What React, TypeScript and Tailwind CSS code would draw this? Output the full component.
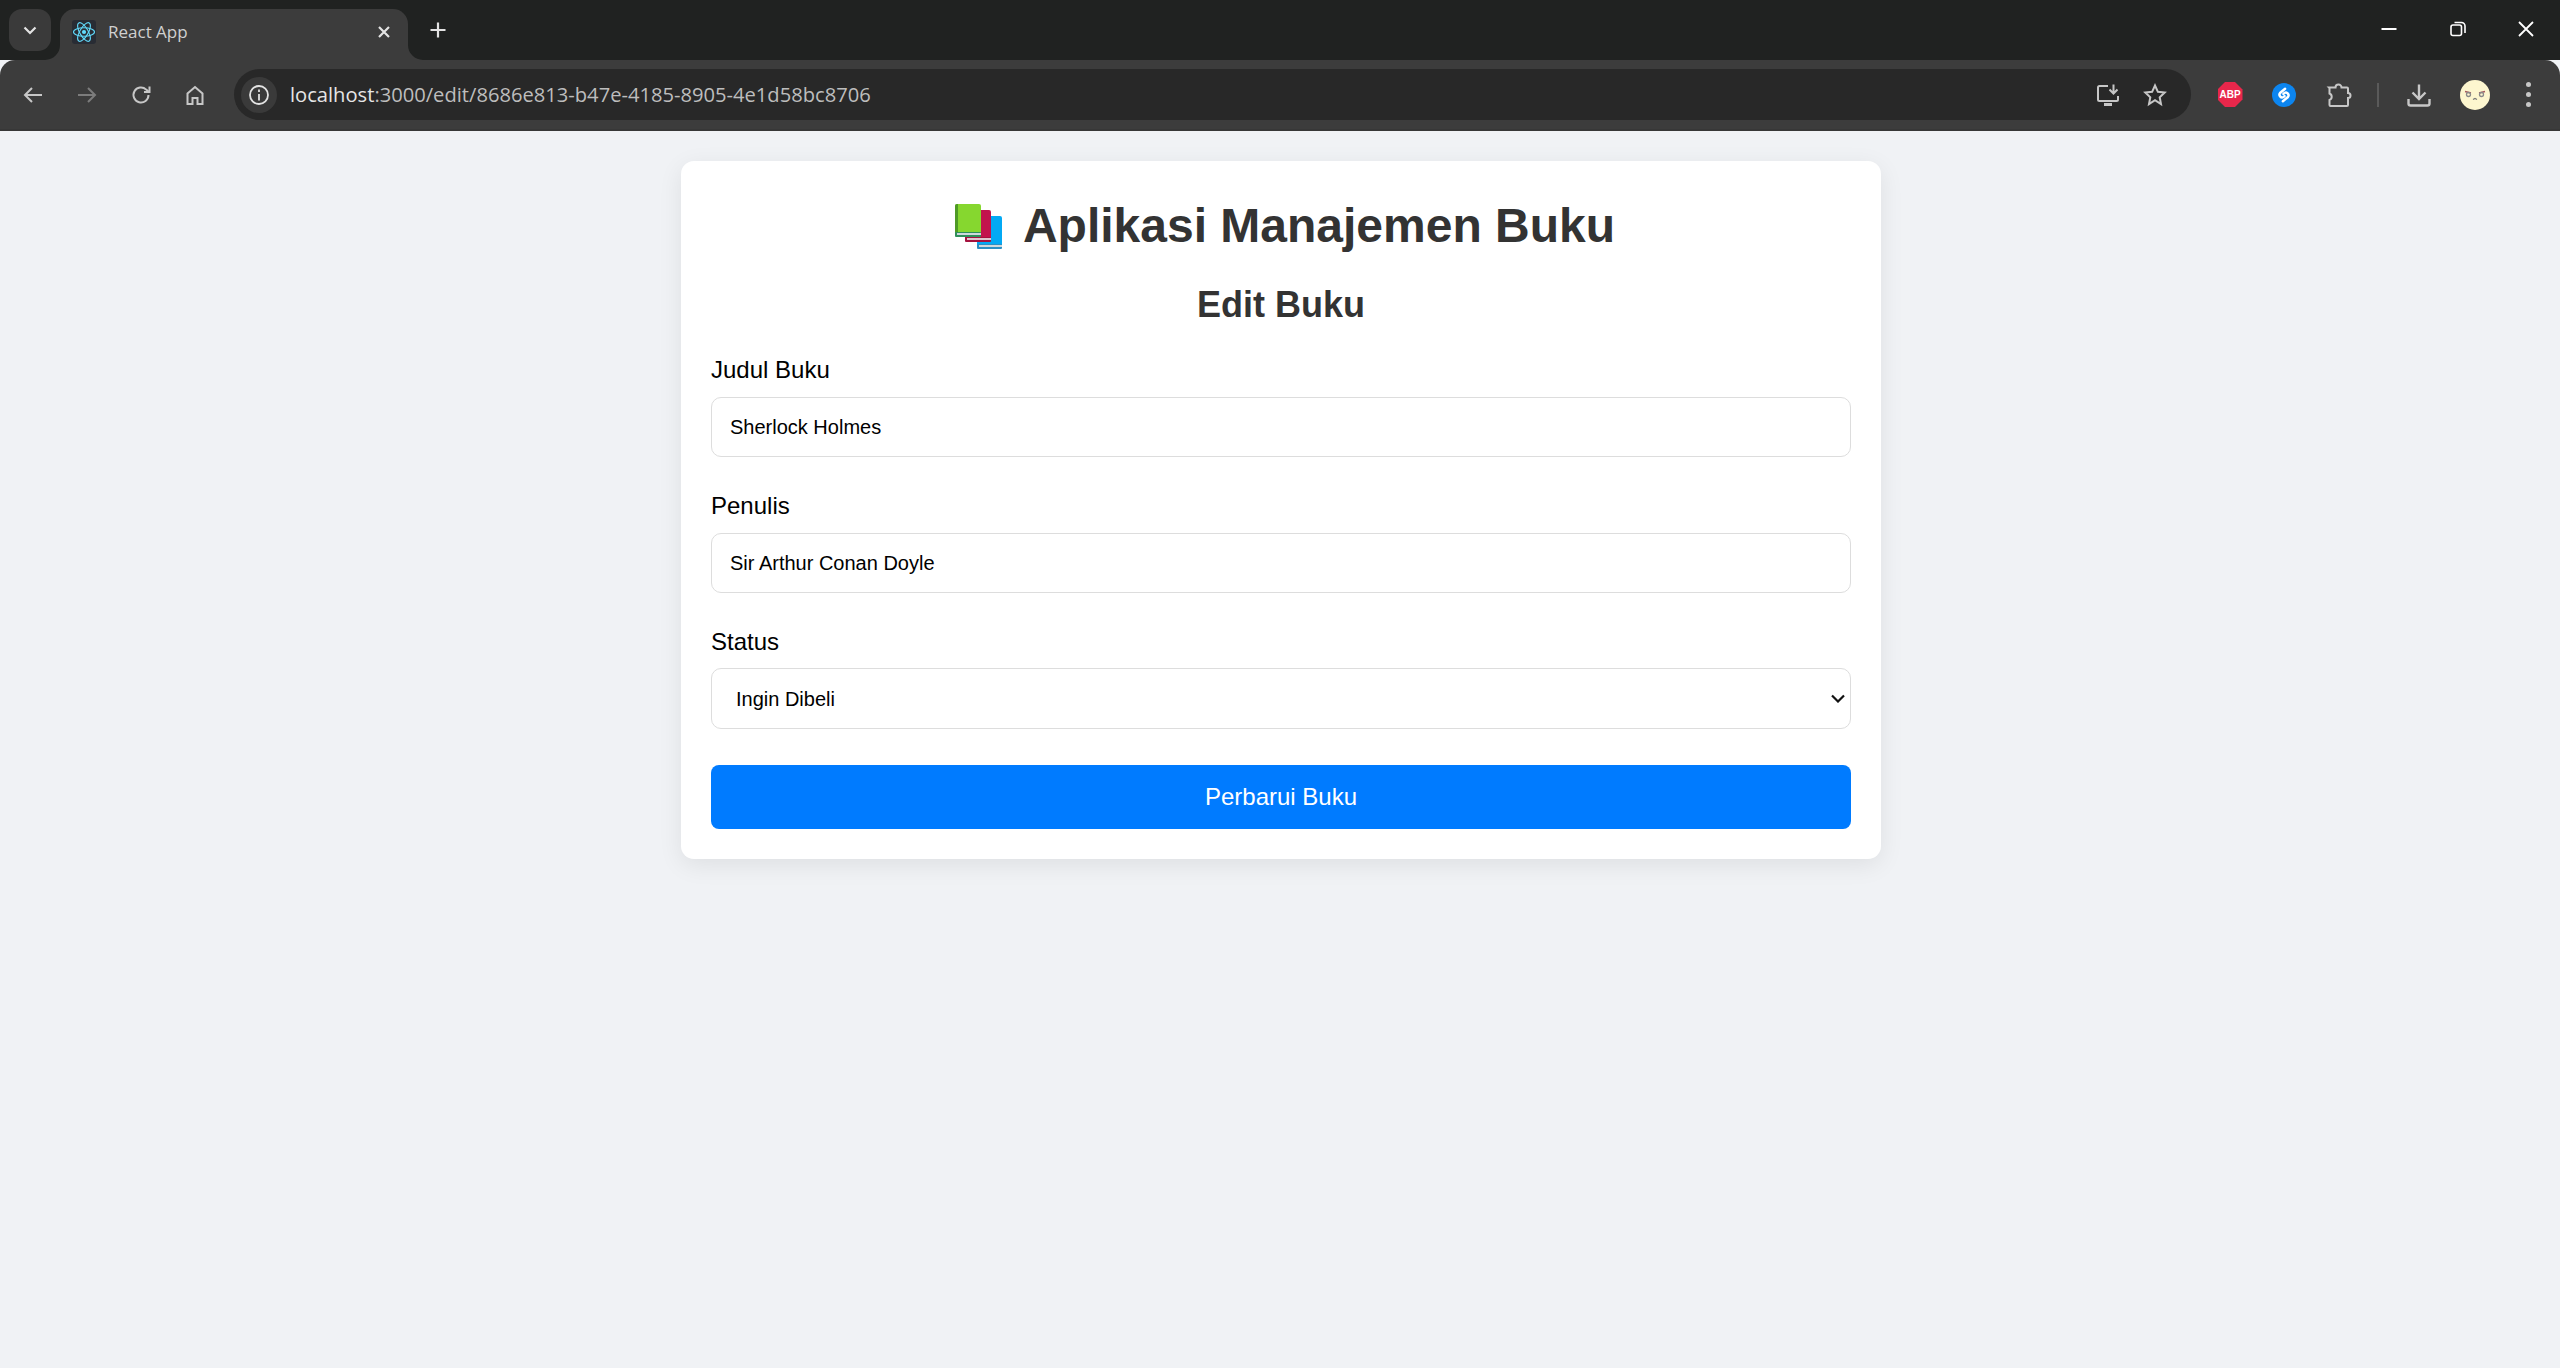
const UI_FONT = "font-['Open_Sans','Noto_Sans',sans-serif]";

function BooksEmoji() {
  return (
    <svg width="47" height="45" viewBox="0 0 47 45" className="shrink-0">
      {/* blue book */}
      <path d="M22 12h23a2 2 0 0 1 2 2v29H22z" fill="#03a9f4" />
      <rect x="22" y="40" width="25" height="5" rx="1" fill="#2b8fc4" />
      <rect x="24" y="41" width="23" height="2" fill="#cfd8dc" />
      {/* red book */}
      <path d="M10 6h24a2 2 0 0 1 2 2v27H10z" fill="#c2134d" />
      <rect x="10" y="33" width="26" height="5" rx="1" fill="#a5123f" />
      <rect x="12" y="34" width="24" height="2" fill="#e0c5cf" />
      {/* green book */}
      <path d="M2 0h22a2 2 0 0 1 2 2v30H0V2a2 2 0 0 1 2-2z" fill="#86d72f" />
      <path d="M2 0h1v32H0V2a2 2 0 0 1 2-2z" fill="#4f9a26" />
      <rect x="0" y="28" width="26" height="5" rx="1" fill="#2f8f5b" />
      <rect x="2" y="29" width="24" height="2" fill="#cfd8dc" />
    </svg>
  );
}

function ReactFavicon() {
  return (
    <div className="w-6 h-6 rounded-[3px] bg-[#282c34] flex items-center justify-center shrink-0">
      <svg width="24" height="24" viewBox="0 0 24 24" fill="none" stroke="#61dafb" strokeWidth="1.1">
        <circle cx="12" cy="12" r="2.1" fill="#61dafb" stroke="none" />
        <ellipse cx="12" cy="12" rx="10.5" ry="4.2" />
        <ellipse cx="12" cy="12" rx="10.5" ry="4.2" transform="rotate(60 12 12)" />
        <ellipse cx="12" cy="12" rx="10.5" ry="4.2" transform="rotate(120 12 12)" />
      </svg>
    </div>
  );
}

function ToolIcon({ children, dim }: { children: React.ReactNode; dim?: boolean }) {
  return (
    <div className="w-[54px] h-[42px] flex items-center justify-center shrink-0">
      <svg
        width="24"
        height="24"
        viewBox="0 0 24 24"
        fill="none"
        stroke={dim ? "#7c7c7c" : "#c7c7c7"}
        strokeWidth="2"
      >
        {children}
      </svg>
    </div>
  );
}

function TabStrip() {
  return (
    <div className="h-[60px] flex bg-[#202221] shrink-0">
      <div className="ml-[9px] mt-[9px] w-[42px] h-[42px] rounded-[13px] bg-[#3a3a3a] flex items-center justify-center">
        <svg width="16" height="16" viewBox="0 0 16 16" fill="none" stroke="#e3e3e3" strokeWidth="2.2">
          <path d="M2.5 5.5 8 11l5.5-5.5" />
        </svg>
      </div>
      <div className={`relative ml-[9px] mt-[9px] w-[348px] h-[51px] rounded-t-[15px] bg-[#3c3c3c] flex items-center pl-3 pr-[17px] pb-[6px] ${UI_FONT}`}>
        <svg width="15" height="15" viewBox="0 0 15 15" className="absolute -left-[15px] bottom-0">
          <path d="M15 0v15H0a15 15 0 0 0 15-15z" fill="#3c3c3c" />
        </svg>
        <svg width="15" height="15" viewBox="0 0 15 15" className="absolute -right-[15px] bottom-0">
          <path d="M0 0v15h15A15 15 0 0 1 0 0z" fill="#3c3c3c" />
        </svg>
        <ReactFavicon />
        <span className="ml-3 text-[17px] text-[#d0d0d0] leading-none">React App</span>
        <svg width="14" height="14" viewBox="0 0 14 14" className="ml-auto" stroke="#e3e3e3" strokeWidth="2.2">
          <path d="M2 2l10 10M12 2 2 12" />
        </svg>
      </div>
      <div className="ml-[9px] w-[42px] h-[60px] flex items-center justify-center">
        <svg width="18" height="18" viewBox="0 0 18 18" stroke="#e3e3e3" strokeWidth="2.2">
          <path d="M9 1.5v15M1.5 9h15" />
        </svg>
      </div>
      <div className="ml-auto flex">
        <div className="w-[69px] h-[58px] flex items-center justify-center">
          <svg width="16" height="16" viewBox="0 0 16 16" stroke="#ffffff" strokeWidth="2">
            <path d="M0.5 8h15" />
          </svg>
        </div>
        <div className="w-[69px] h-[58px] flex items-center justify-center">
          <svg width="16" height="16" viewBox="0 0 16 16" fill="none" stroke="#ffffff" strokeWidth="1.6">
            <rect x="1" y="4" width="10.5" height="10.5" rx="2" />
            <path d="M4.5 1.5h7a3.5 3.5 0 0 1 3.5 3.5v7" />
          </svg>
        </div>
        <div className="w-[68px] h-[58px] flex items-center justify-center">
          <svg width="16" height="16" viewBox="0 0 16 16" stroke="#ffffff" strokeWidth="1.8">
            <path d="M1 1l14 14M15 1 1 15" />
          </svg>
        </div>
      </div>
    </div>
  );
}

function AddressBar() {
  return (
    <div className="h-[71px] bg-[#3c3c3c] rounded-t-[15px] border-b-2 border-[#373737] flex items-start pt-[9px] shrink-0">
      <div className="ml-[6px] flex h-[51px] items-center">
        <ToolIcon>
          <path d="M21 12H4M11 5l-7 7 7 7" />
        </ToolIcon>
        <ToolIcon dim>
          <path d="M3 12h17M13 5l7 7-7 7" />
        </ToolIcon>
        <ToolIcon>
          <path d="M19.5 12a7.5 7.5 0 1 1-2.3-5.4L20 9" />
          <path d="M20.5 3.5V9H15" />
        </ToolIcon>
        <ToolIcon>
          <path d="M4.5 21V10.5L12 4l7.5 6.5V21h-5v-6h-5v6z" />
        </ToolIcon>
      </div>
      <div className="ml-[12px] w-[1957px] h-[51px] rounded-full bg-[#282828] flex items-center pl-[7px]">
        <div className="w-9 h-9 rounded-full bg-[#3a3a3a] flex items-center justify-center">
          <svg width="22" height="22" viewBox="0 0 22 22" fill="none" stroke="#e3e3e3" strokeWidth="1.8">
            <circle cx="11" cy="11" r="9" />
            <path d="M11 10v6.5M11 5.5v2.4" />
          </svg>
        </div>
        <span className={`ml-[13px] text-[20.15px] leading-none ${UI_FONT}`}>
          <span className="text-[#e6e6e6]">localhost</span>
          <span className="text-[#bdbdbd]">:3000/edit/8686e813-b47e-4185-8905-4e1d58bc8706</span>
        </span>
        <div className="ml-auto flex items-center gap-[23px] pr-[24px]">
          <svg width="24" height="24" viewBox="0 0 24 24" fill="none" stroke="#c7c7c7" strokeWidth="2">
            <path d="M12 3H3.5A1.5 1.5 0 0 0 2 4.500v12A1.500 1.500 0 0 0 3.500 18h17a1.500 1.500 0 0 0 1.500-1.500V13" />
            <path d="M8 21.500h8" strokeWidth="3" />
            <path d="M17.500 1.500V10M13.500 6.500l4 4 4-4" />
          </svg>
          <svg width="24" height="24" viewBox="0 0 24 24" fill="none" stroke="#c7c7c7" strokeWidth="2">
            <path d="M12 2.500l2.900 6.300 6.800.8-5 4.700 1.300 6.800L12 17.200l-6 3.900 1.300-6.800-5-4.700 6.800-.8z" />
          </svg>
        </div>
      </div>
      <div className="ml-[12px] flex h-[51px] items-center">
        <div className="w-[54px] flex justify-center">
          <div className="w-[25px] h-[25px] bg-[#e8274b] flex items-center justify-center [clip-path:polygon(30%_0,70%_0,100%_30%,100%_70%,70%_100%,30%_100%,0_70%,0_30%)]">
            <span className="font-['Liberation_Sans',sans-serif] font-bold text-[10px] leading-none text-white">ABP</span>
          </div>
        </div>
        <div className="w-[54px] flex justify-center">
          <div className="w-6 h-6 rounded-full bg-[#0c85f0] flex items-center justify-center">
            <svg width="18" height="18" viewBox="0 0 16 16" fill="none" stroke="#ffffff" strokeWidth="2.2" strokeLinecap="round">
              <path d="M9 2.500 4.500 6.200a2.400 2.400 0 0 0 3 3.600l1-.8" />
              <path d="M7 13.500l4.500-3.700a2.400 2.400 0 0 0-3-3.600l-1 .8" />
            </svg>
          </div>
        </div>
        <div className="w-[54px] flex justify-center pl-[2px]">
          <svg width="26" height="26" viewBox="0 0 26 26" fill="none" stroke="#c7c7c7" strokeWidth="2">
            <path d="M3 5.500h6.500a3 3 0 0 1 6 0H21a1 1 0 0 1 1 1V11a2.500 2.500 0 0 1 0 5v7a1 1 0 0 1-1 1H4.500a1 1 0 0 1-1-1v-5a3.500 3.500 0 0 0 0-6.500V6z" />
          </svg>
        </div>
        <div className="ml-[12px] w-[2px] h-6 bg-[#5a5a5a]" />
        <div className="ml-[13px] w-[54px] flex justify-center">
          <svg width="26" height="26" viewBox="0 0 26 26" fill="none" stroke="#c7c7c7" strokeWidth="2.400">
            <path d="M13 2.500V17M6.500 10.500 13 17l6.500-6.500" />
            <path d="M2.500 17v4.500a2 2 0 0 0 2 2h17a2 2 0 0 0 2-2V17" />
          </svg>
        </div>
        <div className="ml-[14px] w-[30px] h-[30px] rounded-full bg-[#fdf6cf] flex items-center justify-center">
          <svg width="24" height="14" viewBox="0 0 24 14" fill="none" strokeWidth="1.300">
            <path d="M2 3.500l6 1.500M22 3.500 16 5" stroke="#a4575d" />
            <circle cx="5.500" cy="6.500" r="2" stroke="#8a8a8a" />
            <circle cx="18.500" cy="6.500" r="2" stroke="#8a8a8a" />
            <path d="M10 11.500l2-1 2 1" stroke="#777777" />
          </svg>
        </div>
        <div className="ml-[36px] flex flex-col gap-[5px]">
          <div className="w-[5px] h-[5px] rounded-full bg-[#c7c7c7]" />
          <div className="w-[5px] h-[5px] rounded-full bg-[#c7c7c7]" />
          <div className="w-[5px] h-[5px] rounded-full bg-[#c7c7c7]" />
        </div>
      </div>
    </div>
  );
}

function Field({ label, value, gap }: { label: string; value: string; gap: string }) {
  return (
    <div className={gap}>
      <label className="block text-[24px] leading-[28px] text-black mb-[13px]">{label}</label>
      <input
        defaultValue={value}
        className="w-full h-[60px] border border-[#dddddd] rounded-[10px] bg-white px-[18px] text-[20px] text-black"
      />
    </div>
  );
}

export default function App() {
  return (
    <div className="h-[1368px] flex flex-col bg-[#f0f2f5] overflow-hidden">
      <TabStrip />
      <AddressBar />
      <main className="mt-[30px] ml-[681px] w-[1200px] bg-white rounded-[13px] shadow-[0_6px_24px_rgba(0,0,0,0.08)] p-[30px] font-['Liberation_Sans',Arial,sans-serif]">
        <h1 className="flex items-center justify-center gap-[21px] pl-[8px] text-[48px] leading-[70px] font-bold text-[#333333]">
          <BooksEmoji />
          Aplikasi Manajemen Buku
        </h1>
        <h2 className="mt-[22px] text-center text-[36px] leading-[44px] font-bold text-[#333333]">Edit Buku</h2>
        <form className="mt-[29px]">
          <Field label="Judul Buku" value="Sherlock Holmes" gap="mb-[35px]" />
          <Field label="Penulis" value="Sir Arthur Conan Doyle" gap="mb-[35px]" />
          <div className="mb-[36px]">
            <label className="block text-[24px] leading-[28px] text-black mb-[12px]">Status</label>
            <div className="relative">
              <select
                defaultValue="Ingin Dibeli"
                className="w-full h-[61px] appearance-none border border-[#dddddd] rounded-[10px] bg-white px-[24px] text-[20px] text-black"
              >
                <option>Ingin Dibeli</option>
                <option>Sedang Dibaca</option>
                <option>Selesai Dibaca</option>
              </select>
              <svg
                width="14"
                height="9"
                viewBox="0 0 14 9"
                fill="none"
                stroke="#111111"
                strokeWidth="2.2"
                className="absolute right-[6px] top-[26px] pointer-events-none"
              >
                <path d="M1 1.500 7 7.500l6-6" />
              </svg>
            </div>
          </div>
          <button type="button" className="w-full h-[64px] rounded-[8px] bg-[#007bff] text-white text-[24px]">
            Perbarui Buku
          </button>
        </form>
      </main>
    </div>
  );
}
